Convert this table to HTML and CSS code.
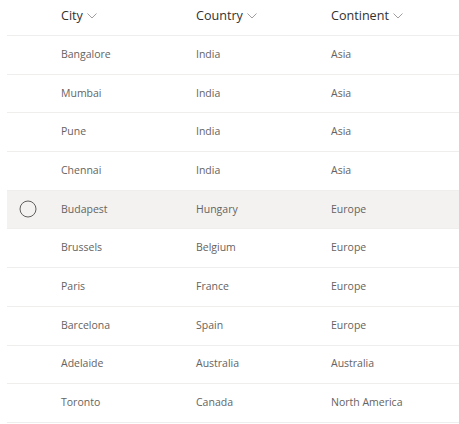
FILE: index.html
```html
<!DOCTYPE html>
<html>
<head>
<meta charset="utf-8">
<link rel="stylesheet" href="styles.css">
</head>
<body>
<div class="list">
  <div class="row header">
    <div class="check"></div>
    <div class="hcell">City <svg class="chev" viewBox="0 0 10 6" width="10" height="6"><polyline points="0.5,0.5 5,5 9.5,0.5"/></svg></div>
    <div class="hcell">Country <svg class="chev" viewBox="0 0 10 6" width="10" height="6"><polyline points="0.5,0.5 5,5 9.5,0.5"/></svg></div>
    <div class="hcell">Continent <svg class="chev" viewBox="0 0 10 6" width="10" height="6"><polyline points="0.5,0.5 5,5 9.5,0.5"/></svg></div>
  </div>
  <div class="row"><div class="check"></div><div class="cell">Bangalore</div><div class="cell">India</div><div class="cell">Asia</div></div>
  <div class="row"><div class="check"></div><div class="cell">Mumbai</div><div class="cell">India</div><div class="cell">Asia</div></div>
  <div class="row"><div class="check"></div><div class="cell">Pune</div><div class="cell">India</div><div class="cell">Asia</div></div>
  <div class="row"><div class="check"></div><div class="cell">Chennai</div><div class="cell">India</div><div class="cell">Asia</div></div>
  <div class="row hover"><div class="check"><svg viewBox="0 0 18 18" width="18" height="18"><circle cx="9" cy="9" r="8"/></svg></div><div class="cell">Budapest</div><div class="cell">Hungary</div><div class="cell">Europe</div></div>
  <div class="row"><div class="check"></div><div class="cell">Brussels</div><div class="cell">Belgium</div><div class="cell">Europe</div></div>
  <div class="row"><div class="check"></div><div class="cell">Paris</div><div class="cell">France</div><div class="cell">Europe</div></div>
  <div class="row"><div class="check"></div><div class="cell">Barcelona</div><div class="cell">Spain</div><div class="cell">Europe</div></div>
  <div class="row"><div class="check"></div><div class="cell">Adelaide</div><div class="cell">Australia</div><div class="cell">Australia</div></div>
  <div class="row"><div class="check"></div><div class="cell">Toronto</div><div class="cell">Canada</div><div class="cell">North America</div></div>
</div>
</body>
</html>
```

FILE: styles.css
```css
html, body {
  margin: 0;
  padding: 0;
  background: #ffffff;
  overflow: hidden;
}
body {
  padding-left: 7px;
  font-family: "Open Sans", "Noto Sans", sans-serif;
}
.list {
  width: 470px;
}
.row {
  display: grid;
  grid-template-columns: 54px 135px 135px 1fr;
  align-items: center;
  height: 38.7px;
  box-sizing: border-box;
  border-bottom: 1px solid #f0eeec;
}
.row.header {
  height: 36px;
}
.row.hover {
  background: #f3f2f1;
}
.check {
  display: flex;
  align-items: center;
  padding-left: 12px;
  padding-bottom: 2px;
}
.check svg {
  display: block;
}
.check circle {
  fill: none;
  stroke: #605e5c;
  stroke-width: 1;
}
.cell {
  font-size: 10.5px;
  color: #656361;
  padding-bottom: 2px;
}
.hcell {
  font-size: 12.6px;
  color: #323130;
  display: flex;
  align-items: center;
  gap: 4px;
  padding-bottom: 4px;
}
.chev {
  fill: none;
  stroke: #a19f9d;
  stroke-width: 1;
}
```
